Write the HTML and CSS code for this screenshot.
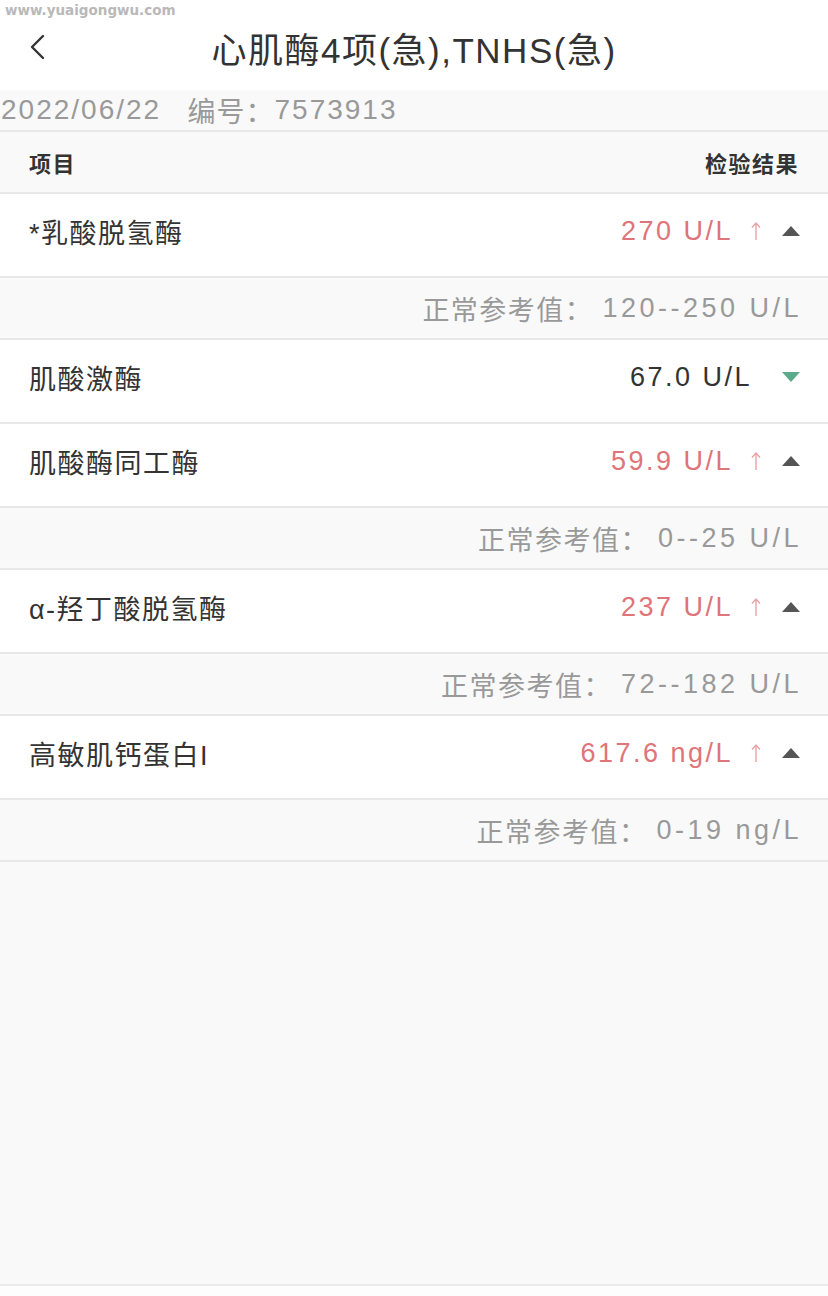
FILE: index.html
```html
<!DOCTYPE html>
<html lang="zh-CN">
<head>
  <meta charset="UTF-8">
  <meta name="viewport" content="width=device-width, initial-scale=1">
  <title>心肌酶4项(急),TNHS(急)</title>
  <link rel="stylesheet" href="styles.css">
</head>
<body>

  <div class="page">
    <div class="topbar">
      <svg class="back" width="16" height="26" viewBox="0 0 16 26">
        <polyline points="14,2 3,13 14,24" fill="none" stroke="#333" stroke-width="2.4" stroke-linecap="round" stroke-linejoin="round"/>
      </svg>
      <h1 class="title">心肌酶4项(急),TNHS(急)</h1>
    </div>

    <div class="watermark">www.yuaigongwu.com</div>

    <div class="info"><span class="num">2022/06/22</span>&nbsp;&nbsp;&nbsp;编号：<span class="num">7573913</span></div>

    <div class="thead">
      <span>项目</span>
      <span>检验结果</span>
    </div>

    <div class="row">
      <span class="name">*乳酸脱氢酶</span>
      <span class="res high">
        <span class="val">270 U/L</span>
        <svg class="arrow" width="10" height="20" viewBox="0 0 10 20"><path d="M5 19V2M1 6.5L5 2L9 6.5" fill="none" stroke="#eaa3a6" stroke-width="1.4"/></svg>
        <svg class="tri" width="18" height="10" viewBox="0 0 18 10"><polygon points="9,0 18,10 0,10" fill="#555"/></svg>
      </span>
    </div>
    <div class="ref">正常参考值：&nbsp;<span class="num">120--250 U/L</span></div>

    <div class="row">
      <span class="name">肌酸激酶</span>
      <span class="res normal">
        <span class="val">67.0 U/L</span>
        <svg class="tri" width="18" height="10" viewBox="0 0 18 10"><polygon points="0,0 18,0 9,10" fill="#5aaa8b"/></svg>
      </span>
    </div>

    <div class="row">
      <span class="name">肌酸酶同工酶</span>
      <span class="res high">
        <span class="val">59.9 U/L</span>
        <svg class="arrow" width="10" height="20" viewBox="0 0 10 20"><path d="M5 19V2M1 6.5L5 2L9 6.5" fill="none" stroke="#eaa3a6" stroke-width="1.4"/></svg>
        <svg class="tri" width="18" height="10" viewBox="0 0 18 10"><polygon points="9,0 18,10 0,10" fill="#555"/></svg>
      </span>
    </div>
    <div class="ref">正常参考值：&nbsp;<span class="num">0--25 U/L</span></div>

    <div class="row">
      <span class="name">α-羟丁酸脱氢酶</span>
      <span class="res high">
        <span class="val">237 U/L</span>
        <svg class="arrow" width="10" height="20" viewBox="0 0 10 20"><path d="M5 19V2M1 6.5L5 2L9 6.5" fill="none" stroke="#eaa3a6" stroke-width="1.4"/></svg>
        <svg class="tri" width="18" height="10" viewBox="0 0 18 10"><polygon points="9,0 18,10 0,10" fill="#555"/></svg>
      </span>
    </div>
    <div class="ref">正常参考值：&nbsp;<span class="num">72--182 U/L</span></div>

    <div class="row">
      <span class="name">高敏肌钙蛋白I</span>
      <span class="res high">
        <span class="val">617.6 ng/L</span>
        <svg class="arrow" width="10" height="20" viewBox="0 0 10 20"><path d="M5 19V2M1 6.5L5 2L9 6.5" fill="none" stroke="#eaa3a6" stroke-width="1.4"/></svg>
        <svg class="tri" width="18" height="10" viewBox="0 0 18 10"><polygon points="9,0 18,10 0,10" fill="#555"/></svg>
      </span>
    </div>
    <div class="ref">正常参考值：&nbsp;<span class="num">0-19 ng/L</span></div>

    <div class="fill"></div>
    <div class="bottom"></div>
  </div>

</body>
</html>
```

FILE: styles.css
```css
body {
  margin: 0;
  font-family: 'Liberation Sans', 'Noto Sans CJK SC', sans-serif;
  background-color: #f9f9f9;
  color: #333;
}
.page {
  position: relative;
  display: flex;
  flex-direction: column;
  min-height: 1296px;
}
.watermark {
  position: absolute;
  z-index: 2;
  left: 5px;
  top: 2px;
  font-family: 'DejaVu Sans', sans-serif;
  font-weight: bold;
  font-size: 13.5px;
  color: #b9b9b9;
}
.topbar {
  height: 90px;
  background-color: #fff;
  display: flex;
  align-items: center;
  justify-content: center;
  position: relative;
}
.back {
  position: absolute;
  left: 29px;
  top: 34px;
}
.title {
  margin: 4px 0 0;
  font-size: 35px;
  font-weight: normal;
  letter-spacing: 1.5px;
  color: #333;
}
.info {
  height: 40px;
  padding-left: 1px;
  display: flex;
  align-items: center;
  font-size: 28px;
  letter-spacing: 1px;
  color: #999;
  background-color: #f9f9f9;
  border-bottom: 2px solid #e8e8e8;
}
.info .num {
  letter-spacing: 2px;
}
.thead {
  height: 60px;
  padding: 0 29px;
  display: flex;
  align-items: center;
  justify-content: space-between;
  font-size: 22px;
  font-weight: bold;
  letter-spacing: 1.5px;
  color: #333;
  background-color: #f9f9f9;
  border-bottom: 2px solid #e8e8e8;
}
.row {
  height: 82px;
  padding: 0 28px 0 29px;
  display: flex;
  align-items: center;
  justify-content: space-between;
  font-size: 27px;
  letter-spacing: 1.5px;
  background-color: #fff;
  border-bottom: 2px solid #e8e8e8;
}
.name {
  color: #333;
  margin-top: -8px;
}
.res {
  display: flex;
  align-items: center;
  margin-top: -8px;
}
.val {
  letter-spacing: 2.5px;
}
.res.high .val {
  color: #df7479;
}
.res.normal .val {
  color: #333;
}
.arrow {
  margin-left: 18px;
}
.tri {
  margin-left: 21px;
}
.res.normal .tri {
  margin-left: 30px;
}
.ref {
  height: 60px;
  padding-right: 29px;
  display: flex;
  align-items: center;
  justify-content: flex-end;
  font-size: 27px;
  letter-spacing: 1.5px;
  color: #999;
  background-color: #f9f9f9;
  border-bottom: 2px solid #e8e8e8;
}
.ref .num {
  letter-spacing: 3.5px;
  margin-right: -3px;
}
.fill {
  flex: 1;
}
.bottom {
  height: 10px;
  background-color: #fdfdfd;
  border-top: 2px solid #ececec;
}
```
